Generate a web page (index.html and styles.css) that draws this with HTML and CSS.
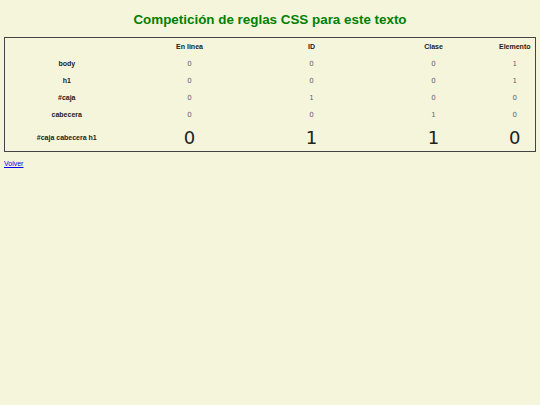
FILE: index.html
```html
<!DOCTYPE html>
<html lang="es">
<head>
<meta charset="utf-8">
<title>Competición de reglas CSS</title>
<link rel="stylesheet" href="styles.css">
</head>
<body>
<h1 class="title">Competición de reglas CSS para este texto</h1>
<table class="spec">
  <colgroup>
    <col class="c-first">
    <col class="c-mid">
    <col class="c-mid">
    <col class="c-mid">
    <col class="c-last">
  </colgroup>
  <tr>
    <th></th><th>En linea</th><th>ID</th><th>Clase</th><th>Elemento</th>
  </tr>
  <tr><th>body</th><td>0</td><td>0</td><td>0</td><td>1</td></tr>
  <tr><th>h1</th><td>0</td><td>0</td><td>0</td><td>1</td></tr>
  <tr><th>#caja</th><td>0</td><td>1</td><td>0</td><td>0</td></tr>
  <tr><th>cabecera</th><td>0</td><td>0</td><td>1</td><td>0</td></tr>
  <tr class="total"><th>#caja cabecera h1</th><td>0</td><td>1</td><td>1</td><td>0</td></tr>
</table>
<a class="back" href="#">Volver</a>
</body>
</html>
```
FILE: styles.css
```css
html, body {
  background: #f5f5dc;
}
body {
  margin: 0 4px;
  font-family: "Liberation Sans", Arial, sans-serif;
}
.title {
  margin: 0;
  padding: 11px 0 9px;
  text-align: center;
  color: #008000;
  font-size: 13.4px;
  line-height: 17px;
  font-weight: bold;
}
.spec {
  width: 100%;
  border-collapse: collapse;
  border: 1px solid #444;
  table-layout: fixed;
}
.c-first { width: 124px; }
.c-mid { width: 122px; }
.spec th, .spec td {
  padding: 0;
  height: 17px;
  text-align: center;
  vertical-align: middle;
  font-size: 7px;
}
.spec th {
  font-weight: bold;
  color: #222;
}
.spec td {
  font-family: "DejaVu Sans", sans-serif;
  color: #666;
}
.spec .total th, .spec .total td {
  height: 28px;
}
.spec .total td {
  font-size: 18px;
  color: #222;
}
.back {
  display: inline-block;
  margin-top: 5px;
  font-size: 7px;
  color: #0000ee;
}
```
